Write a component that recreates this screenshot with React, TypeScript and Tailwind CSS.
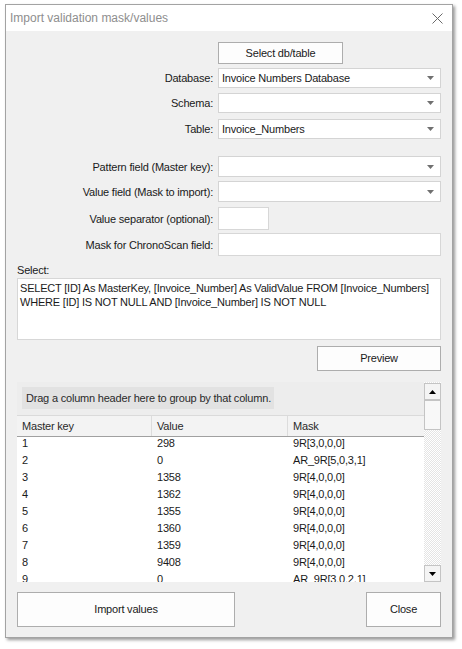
import React from "react";

const font = { fontFamily: '"Liberation Sans", Arial, sans-serif' };

function Arrow() {
  return (
    <svg width="7" height="4" viewBox="0 0 7 4" className="shrink-0">
      <polygon points="0,0 7,0 3.5,4" fill="#707070" />
    </svg>
  );
}

function Combo({ value, h }: { value?: string; h: string }) {
  return (
    <div
      className={`flex-1 ${h} bg-white border border-[#d4d4d4] flex items-center justify-between pl-[3px] pr-[6px] text-[11px] tracking-[-0.2px] text-[#1a1a1a]`}
    >
      <span>{value ?? ""}</span>
      <Arrow />
    </div>
  );
}

function Row({ label, children, mt }: { label: string; children: React.ReactNode; mt: string }) {
  return (
    <div className={`flex items-center ${mt}`}>
      <div className="w-[196px] text-right pr-[0px] text-[11px] tracking-[-0.2px] text-[#1a1a1a] leading-[12px] whitespace-nowrap">
        {label}
      </div>
      <div className="w-[5px]" />
      {children}
    </div>
  );
}

const rows: [string, string, string][] = [
  ["1", "298", "9R[3,0,0,0]"],
  ["2", "0", "AR_9R[5,0,3,1]"],
  ["3", "1358", "9R[4,0,0,0]"],
  ["4", "1362", "9R[4,0,0,0]"],
  ["5", "1355", "9R[4,0,0,0]"],
  ["6", "1360", "9R[4,0,0,0]"],
  ["7", "1359", "9R[4,0,0,0]"],
  ["8", "9408", "9R[4,0,0,0]"],
  ["9", "0", "AR_9R[3,0,2,1]"],
];

export default function App() {
  return (
    <div className="w-[462px] h-[649px] bg-white pt-[4px] pl-[5px]" style={font}>
      <div className="w-[448px] h-[634px] border border-[#a3a3a3] shadow-[2px_2px_3px_rgba(0,0,0,0.4)] flex flex-col">
        {/* Title bar */}
        <div className="h-[26px] bg-white flex items-center justify-between pl-[4px] pr-[9px]">
          <span className="text-[12px] text-[#8e8e8e]">Import validation mask/values</span>
          <svg width="11" height="11" viewBox="0 0 11 11">
            <path d="M0.5 0.5 L10.5 10.5 M10.5 0.5 L0.5 10.5" stroke="#6a6a6a" strokeWidth="1" />
          </svg>
        </div>
        {/* Body */}
        <div className="flex-1 bg-[#f0f0f0] px-[11px] flex flex-col">
          <div className="flex mt-[11px]">
            <div className="w-[201px]" />
            <button className="w-[125px] h-[22px] bg-[#fdfdfd] border border-[#adadad] text-[11px] tracking-[-0.2px] text-[#1a1a1a]">
              Select db/table
            </button>
          </div>
          <Row label="Database:" mt="mt-[4px]">
            <Combo value="Invoice Numbers Database" h="h-[20px]" />
          </Row>
          <Row label="Schema:" mt="mt-[5px]">
            <Combo h="h-[20px]" />
          </Row>
          <Row label="Table:" mt="mt-[6px]">
            <Combo value="Invoice_Numbers" h="h-[20px]" />
          </Row>
          <Row label="Pattern field (Master key):" mt="mt-[17px]">
            <Combo h="h-[21px]" />
          </Row>
          <Row label="Value field (Mask to import):" mt="mt-[4px]">
            <Combo h="h-[21px]" />
          </Row>
          <Row label="Value separator (optional):" mt="mt-[5px]">
            <div className="w-[51px] h-[23px] bg-white border border-[#d7d7d7]" />
          </Row>
          <Row label="Mask for ChronoScan field:" mt="mt-[3px]">
            <div className="flex-1 h-[23px] bg-white border border-[#d7d7d7]" />
          </Row>
          <div className="mt-[8px] h-[12px] leading-[12px] text-[11px] tracking-[-0.2px] text-[#1a1a1a]">Select:</div>
          <div className="mt-[2px] h-[62px] bg-white border border-[#d7d7d7] pl-[2px] pt-[3px] text-[11px] tracking-[-0.2px] leading-[13.5px] text-[#1a1a1a] whitespace-nowrap overflow-hidden">
            <div>SELECT [ID] As MasterKey, [Invoice_Number] As ValidValue FROM [Invoice_Numbers]</div>
            <div>WHERE [ID] IS NOT NULL AND [Invoice_Number] IS NOT NULL</div>
          </div>
          <div className="flex justify-end mt-[6px]">
            <button className="w-[124px] h-[25px] bg-[#fdfdfd] border border-[#adadad] text-[11px] tracking-[-0.2px] text-[#1a1a1a]">
              Preview
            </button>
          </div>
          {/* Grid */}
          <div className="mt-[11px] h-[200px] flex">
            <div className="flex-1 flex flex-col overflow-hidden">
              <div className="h-[33px] bg-[#ededed] pl-[5px] pt-[5px]">
                <div className="w-[252px] h-[22px] bg-[#e2e2e2] flex items-center pl-[4px] text-[11px] tracking-[-0.2px] text-[#2a2a2a]">
                  Drag a column header here to group by that column.
                </div>
              </div>
              <div className="h-[22px] flex bg-[#f3f3f3] border-t border-[#dadada] border-b border-b-[#a0a0a0] text-[11px] tracking-[-0.2px] text-[#2a2a2a]">
                <div className="w-[135px] pl-[5px] flex items-center border-r border-[#dcdcdc]">Master key</div>
                <div className="w-[136px] pl-[5px] flex items-center border-r border-[#dcdcdc]">Value</div>
                <div className="flex-1 pl-[5px] flex items-center">Mask</div>
              </div>
              <div className="flex-1 bg-white overflow-hidden">
                {rows.map((r) => (
                  <div key={r[0]} className="h-[17px] flex text-[11px] tracking-[-0.2px] text-[#1a1a1a] leading-[12px]">
                    <div className="w-[135px] pl-[5px]">{r[0]}</div>
                    <div className="w-[136px] pl-[5px]">{r[1]}</div>
                    <div className="flex-1 pl-[5px]">{r[2]}</div>
                  </div>
                ))}
              </div>
            </div>
            {/* Scrollbar */}
            <div className="w-[17px] flex flex-col [background-image:repeating-conic-gradient(#e4e4e4_0%_25%,#ffffff_0%_50%)] [background-size:2px_2px]">
              <div className="h-[17px] mt-[1px] bg-[#f4f4f4] border border-[#c4c4c4] flex items-center justify-center">
                <svg width="7" height="4" viewBox="0 0 7 4">
                  <polygon points="3.5,0 7,4 0,4" fill="#000" />
                </svg>
              </div>
              <div className="h-[30px] bg-[#f8f8f8] border border-[#c4c4c4]" />
              <div className="flex-1" />
              <div className="h-[17px] bg-[#f4f4f4] border border-[#c4c4c4] flex items-center justify-center">
                <svg width="7" height="4" viewBox="0 0 7 4">
                  <polygon points="0,0 7,0 3.5,4" fill="#000" />
                </svg>
              </div>
            </div>
          </div>
          {/* Bottom buttons */}
          <div className="mt-[10px] flex justify-between">
            <button className="w-[218px] h-[35px] bg-[#fdfdfd] border border-[#adadad] text-[11px] tracking-[-0.2px] text-[#1a1a1a]">
              Import values
            </button>
            <button className="w-[75px] h-[35px] bg-[#fdfdfd] border border-[#adadad] text-[11px] tracking-[-0.2px] text-[#1a1a1a]">
              Close
            </button>
          </div>
        </div>
      </div>
    </div>
  );
}
